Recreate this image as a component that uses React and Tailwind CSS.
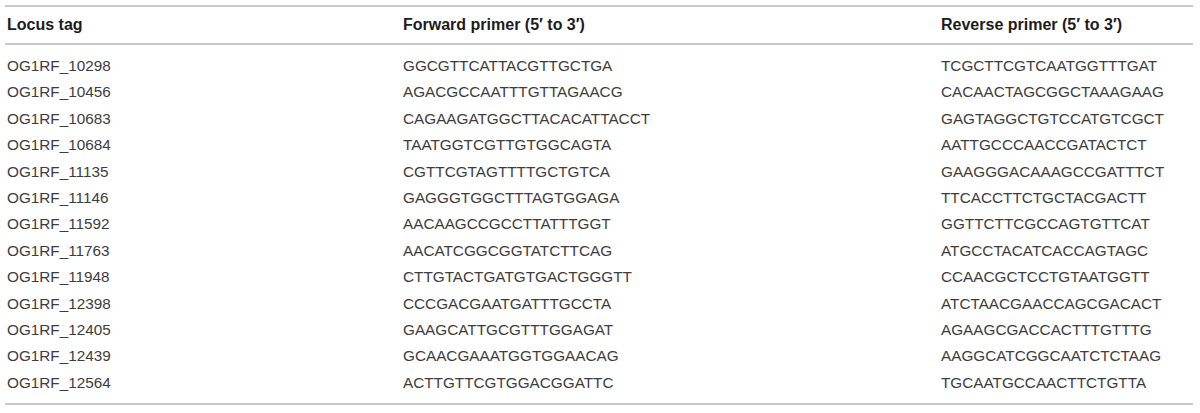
const rows = [
    ['OG1RF_10298', 'GGCGTTCATTACGTTGCTGA', 'TCGCTTCGTCAATGGTTTGAT'],
    ['OG1RF_10456', 'AGACGCCAATTTGTTAGAACG', 'CACAACTAGCGGCTAAAGAAG'],
    ['OG1RF_10683', 'CAGAAGATGGCTTACACATTACCT', 'GAGTAGGCTGTCCATGTCGCT'],
    ['OG1RF_10684', 'TAATGGTCGTTGTGGCAGTA', 'AATTGCCCAACCGATACTCT'],
    ['OG1RF_11135', 'CGTTCGTAGTTTTGCTGTCA', 'GAAGGGACAAAGCCGATTTCT'],
    ['OG1RF_11146', 'GAGGGTGGCTTTAGTGGAGA', 'TTCACCTTCTGCTACGACTT'],
    ['OG1RF_11592', 'AACAAGCCGCCTTATTTGGT', 'GGTTCTTCGCCAGTGTTCAT'],
    ['OG1RF_11763', 'AACATCGGCGGTATCTTCAG', 'ATGCCTACATCACCAGTAGC'],
    ['OG1RF_11948', 'CTTGTACTGATGTGACTGGGTT', 'CCAACGCTCCTGTAATGGTT'],
    ['OG1RF_12398', 'CCCGACGAATGATTTGCCTA', 'ATCTAACGAACCAGCGACACT'],
    ['OG1RF_12405', 'GAAGCATTGCGTTTGGAGAT', 'AGAAGCGACCACTTTGTTTG'],
    ['OG1RF_12439', 'GCAACGAAATGGTGGAACAG', 'AAGGCATCGGCAATCTCTAAG'],
    ['OG1RF_12564', 'ACTTGTTCGTGGACGGATTC', 'TGCAATGCCAACTTCTGTTA'],
]

export default function App() {
    return (
        <div className="w-[1200px] h-[413px] bg-white pt-[5px] font-['Liberation_Sans',Arial,sans-serif]">
            <div className="ml-[5px] w-[1188px] border-t-2 border-b-2 border-[#c9c9c9]">
                {/* 表头 */}
                <div className="grid grid-cols-[396px_538px_1fr] h-[38px] items-center border-b-2 border-[#c9c9c9] text-[16px] font-bold text-[#1c1c1c]">
                    <div className="pl-[2px]">Locus tag</div>
                    <div className="pl-[2px]">Forward primer (5′ to 3′)</div>
                    <div className="pl-[2px]">Reverse primer (5′ to 3′)</div>
                </div>

                {/* 数据行 */}
                <div className="pt-[8px] pb-[7px] text-[15.3px] leading-[26.4px] text-[#3d3d3d]">
                    {rows.map(([tag, fwd, rev]) => (
                        <div key={tag} className="grid grid-cols-[396px_538px_1fr]">
                            <div className="pl-[2px]">{tag}</div>
                            <div className="pl-[2px]">{fwd}</div>
                            <div className="pl-[2px]">{rev}</div>
                        </div>
                    ))}
                </div>
            </div>
        </div>
    )
}
